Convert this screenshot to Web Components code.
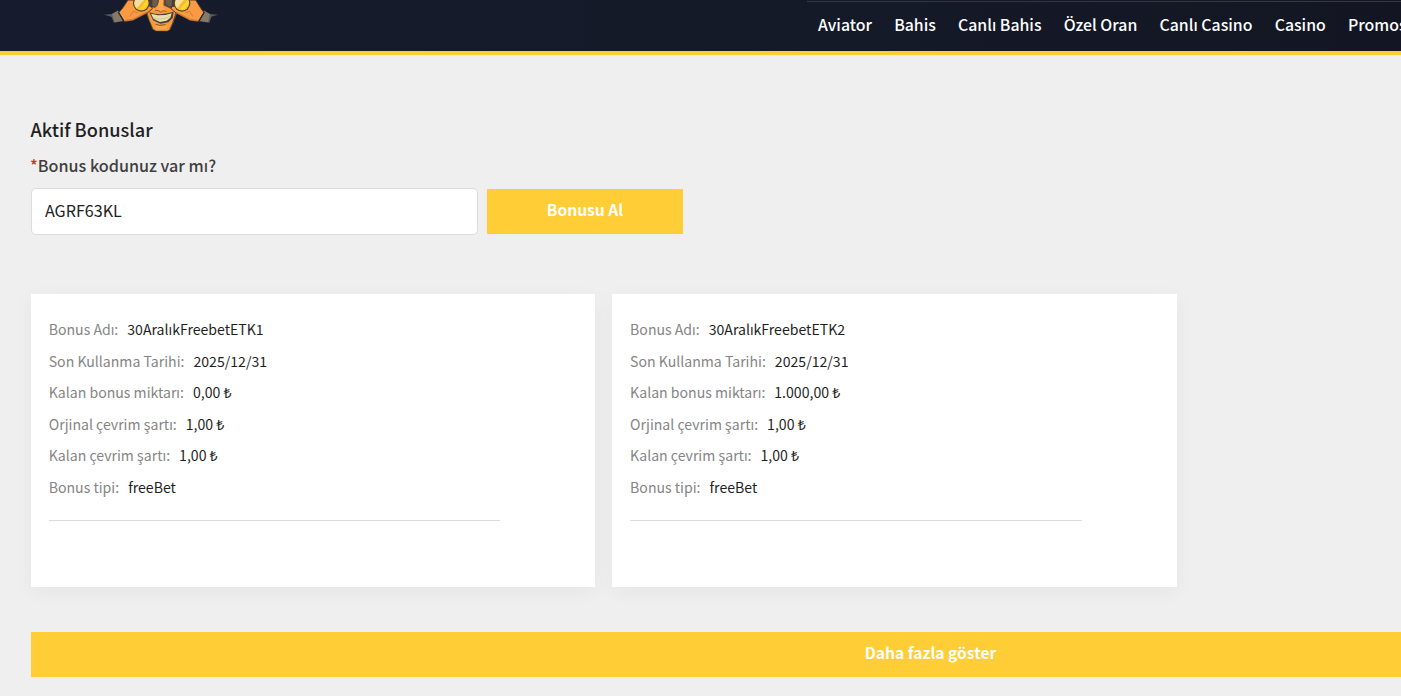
<!DOCTYPE html>
<html lang="tr">
<head>
<meta charset="utf-8">
<title>Aktif Bonuslar</title>
<style>
    html, body {
        margin: 0;
        height: 100%;
        overflow: hidden;
        background: #efefef;
    }
    body {
        font-family: "Noto Sans CJK JP", "Noto Sans", sans-serif;
        color: #1f1f1f;
    }
</style>
</head>
<body>
<bonus-page></bonus-page>

<script>
class SiteLogo extends HTMLElement {
    constructor() {
        super();
        this.attachShadow({ mode: "open" }).innerHTML = `
            <style>
                :host { display: block; width: 140px; height: 51px; }
                svg { display: block; }
            </style>
            <svg width="140" height="51" viewBox="0 0 420 153" aria-hidden="true">
                <!-- cuffs -->
                <path d="M42 44l24-2 18-11 18 32-30 5-8-18z" fill="#5d5b58"/>
                <path d="M384 44l-26-2-16-11-18 32 34 5 6-18z" fill="#5d5b58"/>
                <path d="M66 42l17-9 16 29-25 5z" fill="#85796a"/>
                <path d="M360 42l-17-9-16 29 27 5z" fill="#85796a"/>
                <!-- face -->
                <path d="M168 39l18-39h58l18 38-12 31-9 20-8 5h-36l-10-6-11-28z" fill="#6a4a34"/>
                <path d="M172 37l16-20 17-8 18 8 35 17-12 36-8 18-6 4h-33l-9-5-12-28z" fill="#f79a3e"/>
                <path d="M193 72l14 6 26-4-4 14-30 1z" fill="#fba64b"/>
                <path d="M197 73l12 3 18-2" stroke="#8a5329" stroke-width="3" fill="none"/>
                <!-- grin -->
                <path d="M178 37l16 4 17 2 22-3 18-5-3 19-13 13-24 4-22-10z" fill="#45413a"/>
                <path d="M183 41l21 5 22-1 19-5-4 13-11 9-20 4-19-9z" fill="#e9dfad"/>
                <path d="M187 53l17 4 21-2 14-5" stroke="#b5ad8b" stroke-width="1.500" fill="none"/>
                <!-- nose -->
                <path d="M207 0l-3 25-8 5 11 0 7 6 4-6 10 2-8-10 1-22z" fill="#ffa84c"/>
                <path d="M195 31l11 1 7 5 6-5 10 2" fill="none" stroke="#8a532d" stroke-width="2.500"/>
                <!-- hands -->
                <path d="M114 0l-16 24-12 14 17 27 26-4 44-23 14-12-10-26z" fill="#fa9a42" stroke="#4a3a34" stroke-width="3" stroke-linejoin="round"/>
                <path d="M317 0l15 24 10 14-17 27-25-4-43-23-14-12 10-26z" fill="#fa9a42" stroke="#4a3a34" stroke-width="3" stroke-linejoin="round"/>
                <path d="M105 62l23-3 42-22M323 62l-23-3-41-22" fill="none" stroke="#cf7a36" stroke-width="4"/>
                <path d="M119 50l10-16 14 4M309 50l-10-16-13 4" fill="none" stroke="#d17d38" stroke-width="3"/>
                <path d="M85 36l17 29M343 36l-17 29" fill="none" stroke="#242a36" stroke-width="4"/>
                <!-- binoculars -->
                <path d="M172 0h33l-2 16-8 7-16-2zM226 0h33l-2 20-16 1-14-6z" fill="#453e38"/>
                <path d="M187 0h17l-2 14-7 7-8-4zM227 0h19l-1 18-9 1-8-6z" fill="#6d5b4b"/>
                <circle cx="154" cy="10" r="25" fill="#4e4737"/>
                <circle cx="276" cy="10" r="25" fill="#4e4737"/>
                <circle cx="154" cy="10" r="21.500" fill="#fbbd24"/>
                <circle cx="276" cy="10" r="21.500" fill="#fbbd24"/>
                <path d="M133 8l3-8h26l-22 25-5-6zM255 8l3-8h24l-21 25-4-6z" fill="#f5dfa0"/>
                <path d="M148 28l22-28h3l2 11-15 18zM270 28l23-28h2l2 11-15 18z" fill="#ffd62f"/>
            </svg>
        `;
    }
}
customElements.define("site-logo", SiteLogo);

class SiteHeader extends HTMLElement {
    constructor() {
        super();
        this.attachShadow({ mode: "open" }).innerHTML = `
            <style>
                :host {
                    display: flex;
                    box-sizing: border-box;
                    height: 55px;
                    width: 1861px;
                    padding-left: 90px;
                    background: linear-gradient(90deg, #161c2d 0, #151a29 750px, #131622 1401px);
                    border-bottom: 4px solid #ffcd36;
                }
                nav {
                    flex: 1;
                    display: flex;
                    box-sizing: border-box;
                    height: 50px;
                    margin: 1px 0 0 577px;
                    padding: 0 11px;
                    border-top: 1px solid #343744;
                }
            </style>
            <site-logo></site-logo>
            <nav><slot></slot></nav>
        `;
    }
}
customElements.define("site-header", SiteHeader);

class NavLink extends HTMLElement {
    constructor() {
        super();
        this.attachShadow({ mode: "open" }).innerHTML = `
            <style>
                :host {
                    display: block;
                    flex: none;
                    margin-right: 22.2px;
                    font-size: 15.85px;
                    font-weight: 500;
                    line-height: 45px;
                    white-space: nowrap;
                    color: #fff;
                }
            </style>
            <slot></slot>
        `;
    }
}
customElements.define("nav-link", NavLink);

class YellowButton extends HTMLElement {
    constructor() {
        super();
        this.attachShadow({ mode: "open" }).innerHTML = `
            <style>
                :host { display: block; height: 45px; }
                button {
                    display: block;
                    width: 100%;
                    height: 100%;
                    padding: 0 0 4px;
                    border: 0;
                    background: #ffcd36;
                    color: #fff;
                    font: inherit;
                    font-size: 15.6px;
                    font-weight: 700;
                    line-height: 41px;
                    cursor: pointer;
                }
            </style>
            <button type="button"><slot></slot></button>
        `;
    }
}
customElements.define("yellow-button", YellowButton);

class BonusCode extends HTMLElement {
    constructor() {
        super();
        this.attachShadow({ mode: "open" }).innerHTML = `
            <style>
                :host { display: block; }
                label {
                    display: block;
                    margin-left: -1px;
                    font-size: 16.15px;
                    font-weight: 500;
                    line-height: 24px;
                    color: #3f3f3f;
                }
                label span { color: #c9371c; }
                .row {
                    display: flex;
                    align-items: center;
                    gap: 9px;
                    margin-top: 11px;
                }
                input {
                    box-sizing: border-box;
                    width: 447px;
                    height: 47px;
                    padding: 0 13px 3px;
                    border: 1px solid #dcdcdc;
                    border-radius: 5px;
                    background: #fff;
                    color: #212121;
                    font: inherit;
                    font-size: 16.1px;
                    outline: none;
                }
                yellow-button { width: 196px; }
            </style>
            <label for="code"><span>*</span>Bonus kodunuz var mı?</label>
            <div class="row">
                <input id="code" type="text">
                <yellow-button>Bonusu Al</yellow-button>
            </div>
        `;
        this.shadowRoot.getElementById("code").value = this.getAttribute("value") || "";
    }
}
customElements.define("bonus-code", BonusCode);

class BonusField extends HTMLElement {
    constructor() {
        super();
        this.attachShadow({ mode: "open" }).innerHTML = `
            <style>
                :host {
                    display: flex;
                    gap: 9px;
                    height: 31.6px;
                    margin-left: -.3px;
                    font-size: 14.1px;
                    line-height: 31.6px;
                    white-space: nowrap;
                }
                .label { color: #858585; }
                .value { color: #1f1f1f; }
            </style>
            <span class="label"></span>
            <span class="value"><slot></slot></span>
        `;
        this.shadowRoot.querySelector(".label").textContent = this.getAttribute("label");
    }
}
customElements.define("bonus-field", BonusField);

class BonusCard extends HTMLElement {
    constructor() {
        super();
        this.attachShadow({ mode: "open" }).innerHTML = `
            <style>
                :host {
                    display: block;
                    box-sizing: border-box;
                    width: 564.4px;
                    height: 293px;
                    padding: 20px 18px;
                    background: #fff;
                    box-shadow: 0 5px 20px rgba(0, 0, 0, .045);
                }
                hr {
                    width: 451.3px;
                    height: 1px;
                    margin: 16px 0 0;
                    border: 0;
                    background: #dcdcdc;
                }
            </style>
            <slot></slot>
            <hr>
        `;
    }
}
customElements.define("bonus-card", BonusCard);

class BonusPage extends HTMLElement {
    constructor() {
        super();
        this.attachShadow({ mode: "open" }).innerHTML = `
            <style>
                :host { display: block; overflow: hidden; height: 696px; }
                main { width: 1799px; padding: 61px 31px 0; }
                h1 {
                    margin: 0 0 0 -.5px;
                    font-size: 18.2px;
                    font-weight: 500;
                    line-height: 26px;
                }
                bonus-code { margin-top: 11px; }
                .cards { display: flex; gap: 17px; margin: 59px 0 45px; }
            </style>
            <site-header>
                <nav-link>Aviator</nav-link>
                <nav-link>Bahis</nav-link>
                <nav-link>Canlı Bahis</nav-link>
                <nav-link>Özel Oran</nav-link>
                <nav-link>Canlı Casino</nav-link>
                <nav-link>Casino</nav-link>
                <nav-link>Promosyonlar</nav-link>
            </site-header>
            <main>
                <h1>Aktif Bonuslar</h1>
                <bonus-code value="AGRF63KL"></bonus-code>
                <div class="cards">
                    <bonus-card>
                        <bonus-field label="Bonus Adı:">30AralıkFreebetETK1</bonus-field>
                        <bonus-field label="Son Kullanma Tarihi:">2025/12/31</bonus-field>
                        <bonus-field label="Kalan bonus miktarı:">0,00 ₺</bonus-field>
                        <bonus-field label="Orjinal çevrim şartı:">1,00 ₺</bonus-field>
                        <bonus-field label="Kalan çevrim şartı:">1,00 ₺</bonus-field>
                        <bonus-field label="Bonus tipi:">freeBet</bonus-field>
                    </bonus-card>
                    <bonus-card>
                        <bonus-field label="Bonus Adı:">30AralıkFreebetETK2</bonus-field>
                        <bonus-field label="Son Kullanma Tarihi:">2025/12/31</bonus-field>
                        <bonus-field label="Kalan bonus miktarı:">1.000,00 ₺</bonus-field>
                        <bonus-field label="Orjinal çevrim şartı:">1,00 ₺</bonus-field>
                        <bonus-field label="Kalan çevrim şartı:">1,00 ₺</bonus-field>
                        <bonus-field label="Bonus tipi:">freeBet</bonus-field>
                    </bonus-card>
                </div>
                <yellow-button>Daha fazla göster</yellow-button>
            </main>
        `;
    }
}
customElements.define("bonus-page", BonusPage);
</script>
</body>
</html>
